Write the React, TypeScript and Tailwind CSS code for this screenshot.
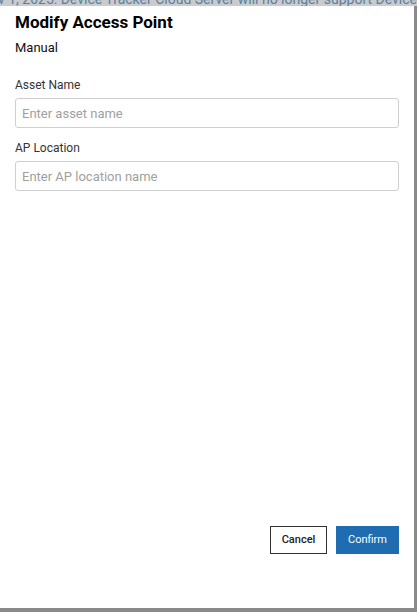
export default function App() {
  return (
    <div
      className="relative h-[612px] w-[417px] overflow-hidden bg-[#8a8a8a]"
      style={{ fontFamily: "Roboto, 'Liberation Sans', sans-serif" }}
    >
      {/* page behind the overlay */}
      <div className="absolute left-0 top-0 h-[6px] w-full overflow-hidden bg-[#c9cbcd]">
        <div className="-mt-[8px] -ml-[2px] whitespace-nowrap text-[14px] leading-[14px] text-[#5d7f9f]">
          v 1, 2025: Device Tracker Cloud Server will no longer support Device Trac
        </div>
      </div>

      <div className="absolute left-0 top-[6px] flex h-[602px] w-[414px] flex-col bg-white px-[15px]">
        <h1 className="mt-[6px] text-[17px] font-bold leading-[20px] text-black">
          Modify Access Point
        </h1>
        <p className="mt-[8px] text-[13px] leading-[16px] text-[#111]">Manual</p>

        <label className="mt-[22px] text-[12px] leading-[14px] text-[#333]">Asset Name</label>
        <input
          className="mt-[6px] h-[30px] w-[384px] rounded-[3px] border border-[#cfcfcf] px-[6px] text-[13px] text-[#333] outline-none placeholder:text-[#a0a0a0]"
          placeholder="Enter asset name"
        />

        <label className="mt-[13px] text-[12px] leading-[14px] text-[#333]">AP Location</label>
        <input
          className="mt-[6px] h-[30px] w-[384px] rounded-[3px] border border-[#cfcfcf] px-[6px] text-[13px] text-[#333] outline-none placeholder:text-[#a0a0a0]"
          placeholder="Enter AP location name"
        />

        <div className="mt-auto mb-[54px] flex justify-end gap-[9px]">
          <button className="h-[28px] w-[57px] border border-[#333] bg-white text-[11px] font-medium text-[#222]">
            Cancel
          </button>
          <button className="h-[28px] w-[63px] bg-[#1f6db0] text-[11px] font-normal text-white">
            Confirm
          </button>
        </div>
      </div>
    </div>
  );
}
